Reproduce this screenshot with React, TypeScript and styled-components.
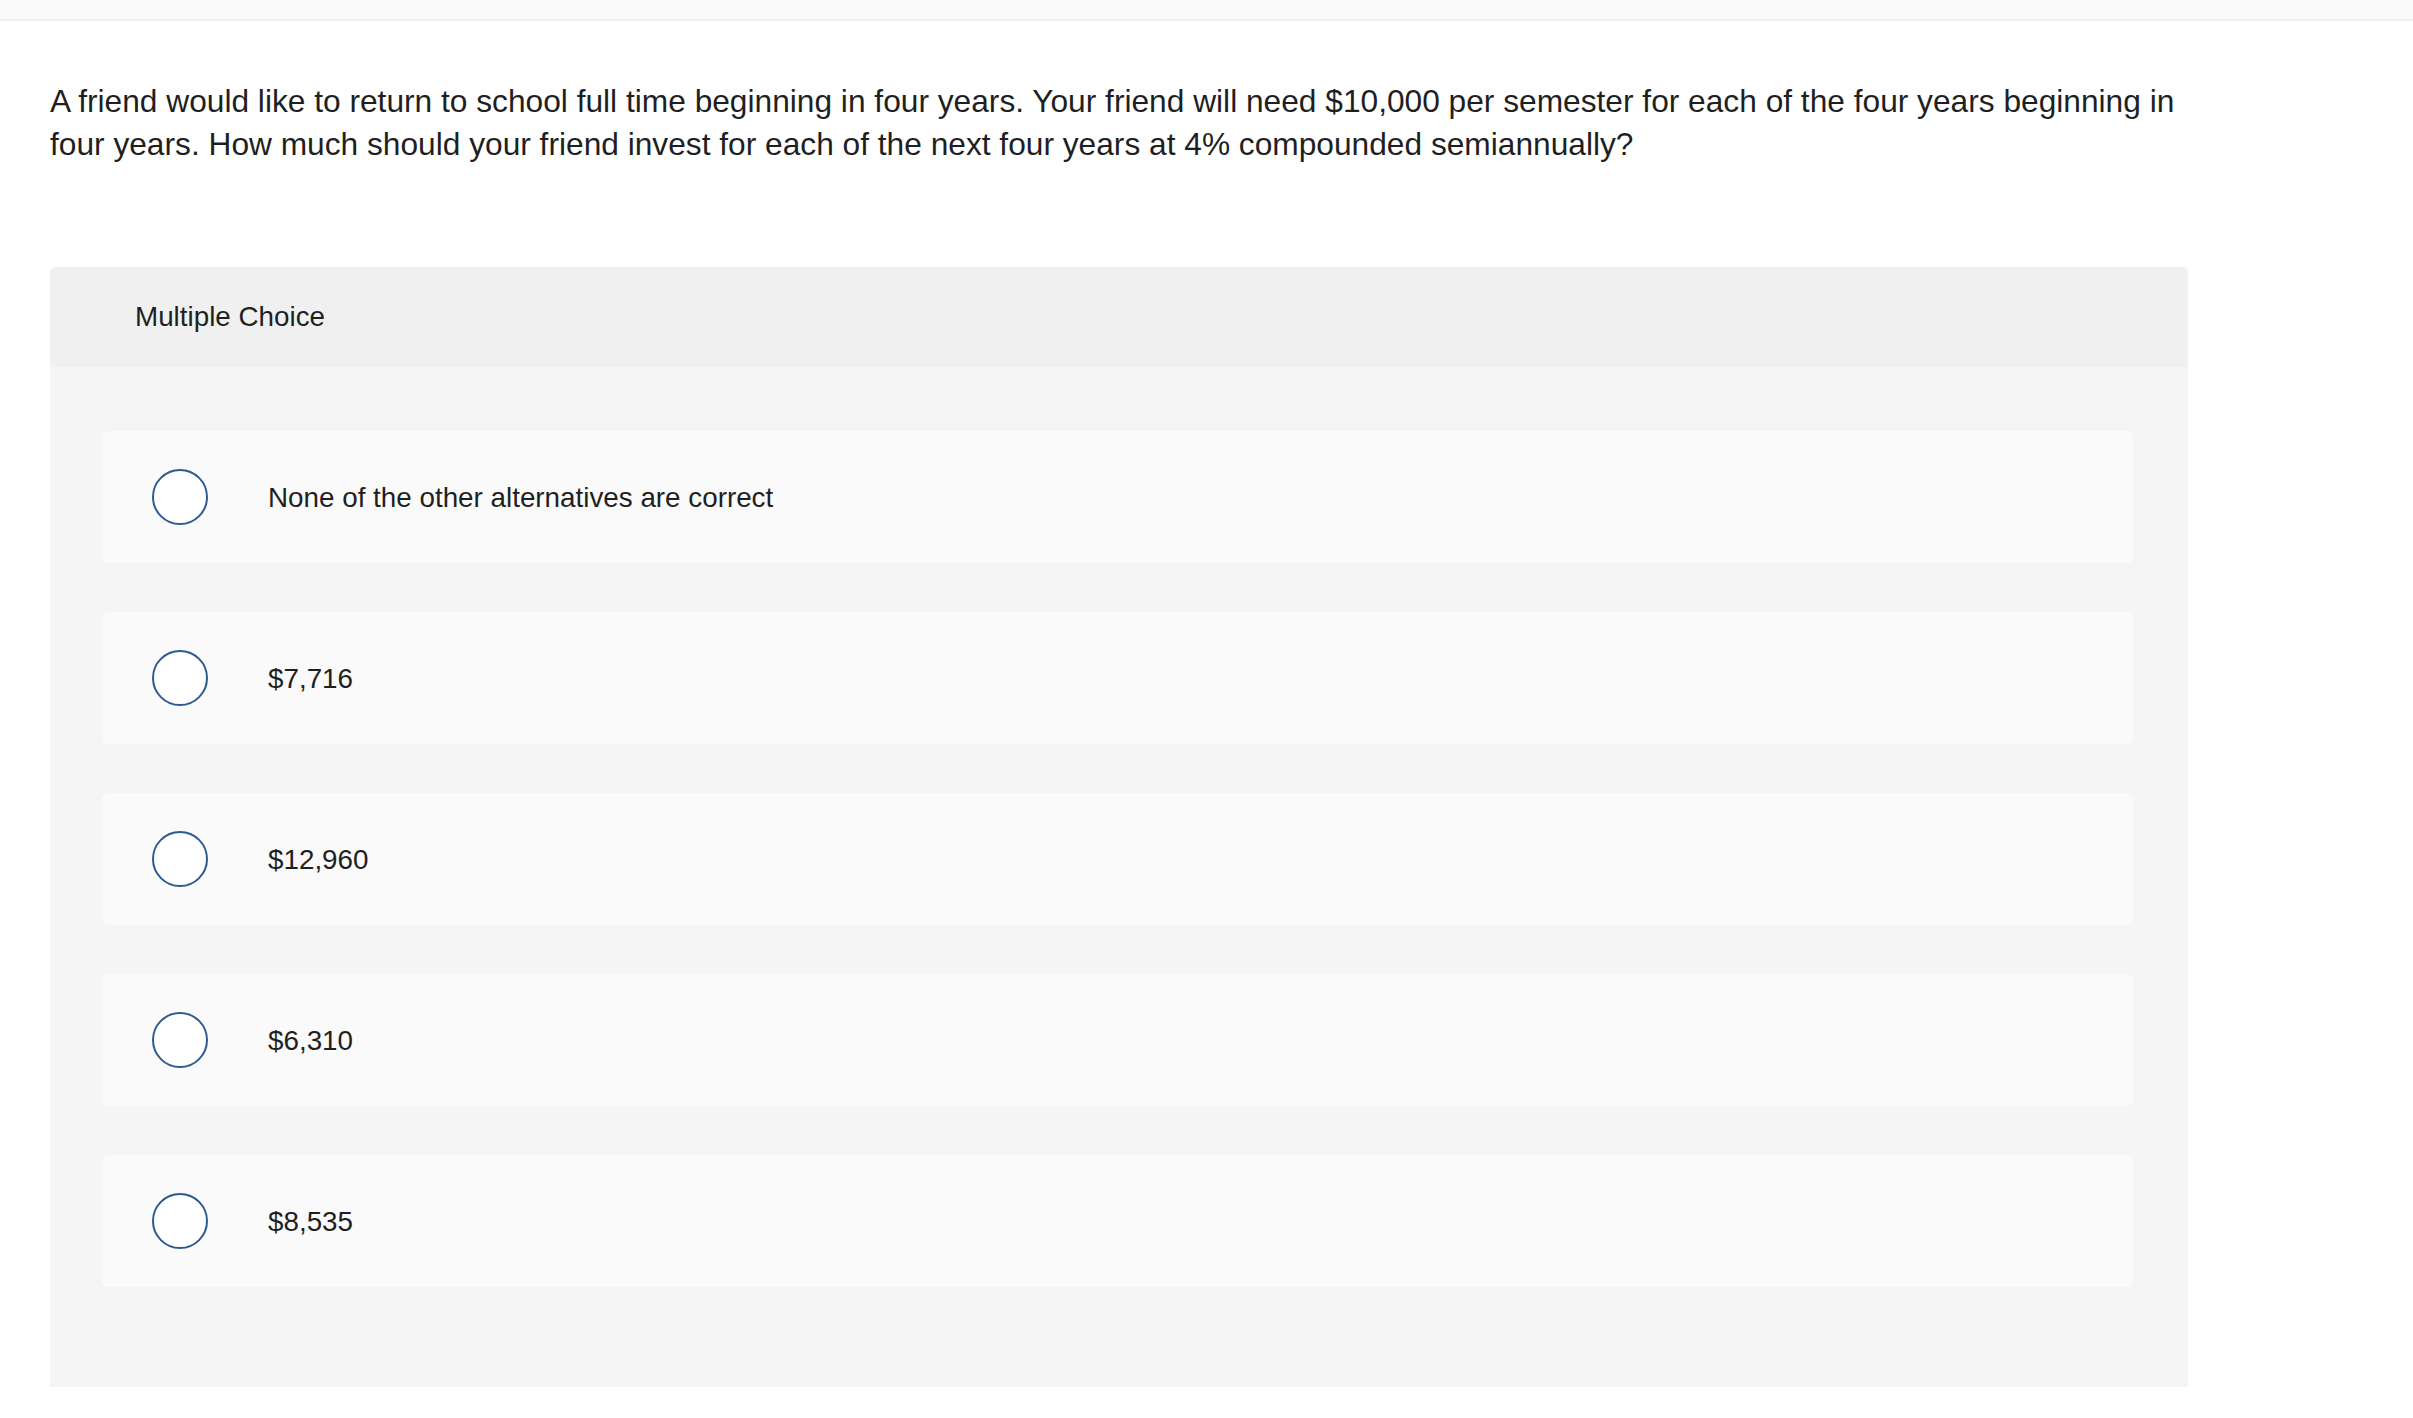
import React from 'react';
import styled, { createGlobalStyle } from 'styled-components';

const GlobalStyle = createGlobalStyle`
	html, body {
		margin: 0;
		padding: 0;
		background: #ffffff;
	}
	body {
		font-family: 'Liberation Sans', Arial, sans-serif;
		color: #1f1f1f;
	}
`;

const options = [
	'None of the other alternatives are correct',
	'$7,716',
	'$12,960',
	'$6,310',
	'$8,535',
];

function App() {
	return (
		<>
			<GlobalStyle />
			<TopBar />
			<Page>
				<Question>
					A friend would like to return to school full time beginning in four
					years. Your friend will need $10,000 per semester for each of the four
					years beginning in four years. How much should your friend invest for
					each of the next four years at 4% compounded semiannually?
				</Question>
				<ChoicePanel>
					<PanelHeader>Multiple Choice</PanelHeader>
					<OptionList>
						{options.map((label) => (
							<OptionCard key={label}>
								<Radio />
								<OptionLabel>{label}</OptionLabel>
							</OptionCard>
						))}
					</OptionList>
				</ChoicePanel>
			</Page>
		</>
	);
}

const TopBar = styled.div`
	height: 19px;
	background: #fafafa;
	border-bottom: 2px solid #efefef;
`;

const Page = styled.main`
	padding: 0 0 0 50px;
	width: 2138px;
`;

const Question = styled.p`
	margin: 59px 0 101px;
	font-size: 31.7px;
	line-height: 43px;
	color: #1f1f1f;
`;

const ChoicePanel = styled.section`
	background: #f5f5f5;
	border-radius: 6px 6px 0 0;
	overflow: hidden;
`;

const PanelHeader = styled.div`
	height: 100px;
	display: flex;
	align-items: center;
	padding-left: 85px;
	background: #f0f0f0;
	font-size: 27.8px;
	color: #1f1f1f;
`;

const OptionList = styled.div`
	display: flex;
	flex-direction: column;
	gap: 49px;
	padding: 64px 55px 100px 52px;
`;

const OptionCard = styled.label`
	display: flex;
	align-items: center;
	height: 132px;
	padding-left: 50px;
	background: #fafafa;
	border-radius: 6px;
	cursor: pointer;
`;

const Radio = styled.span`
	box-sizing: border-box;
	flex-shrink: 0;
	width: 56px;
	height: 56px;
	margin-right: 60px;
	border: 2px solid #2d5b8f;
	border-radius: 50%;
	background: #ffffff;
`;

const OptionLabel = styled.span`
	font-size: 27.8px;
	line-height: 1;
	padding-top: 2px;
	color: #1f1f1f;
`;

export default App;
